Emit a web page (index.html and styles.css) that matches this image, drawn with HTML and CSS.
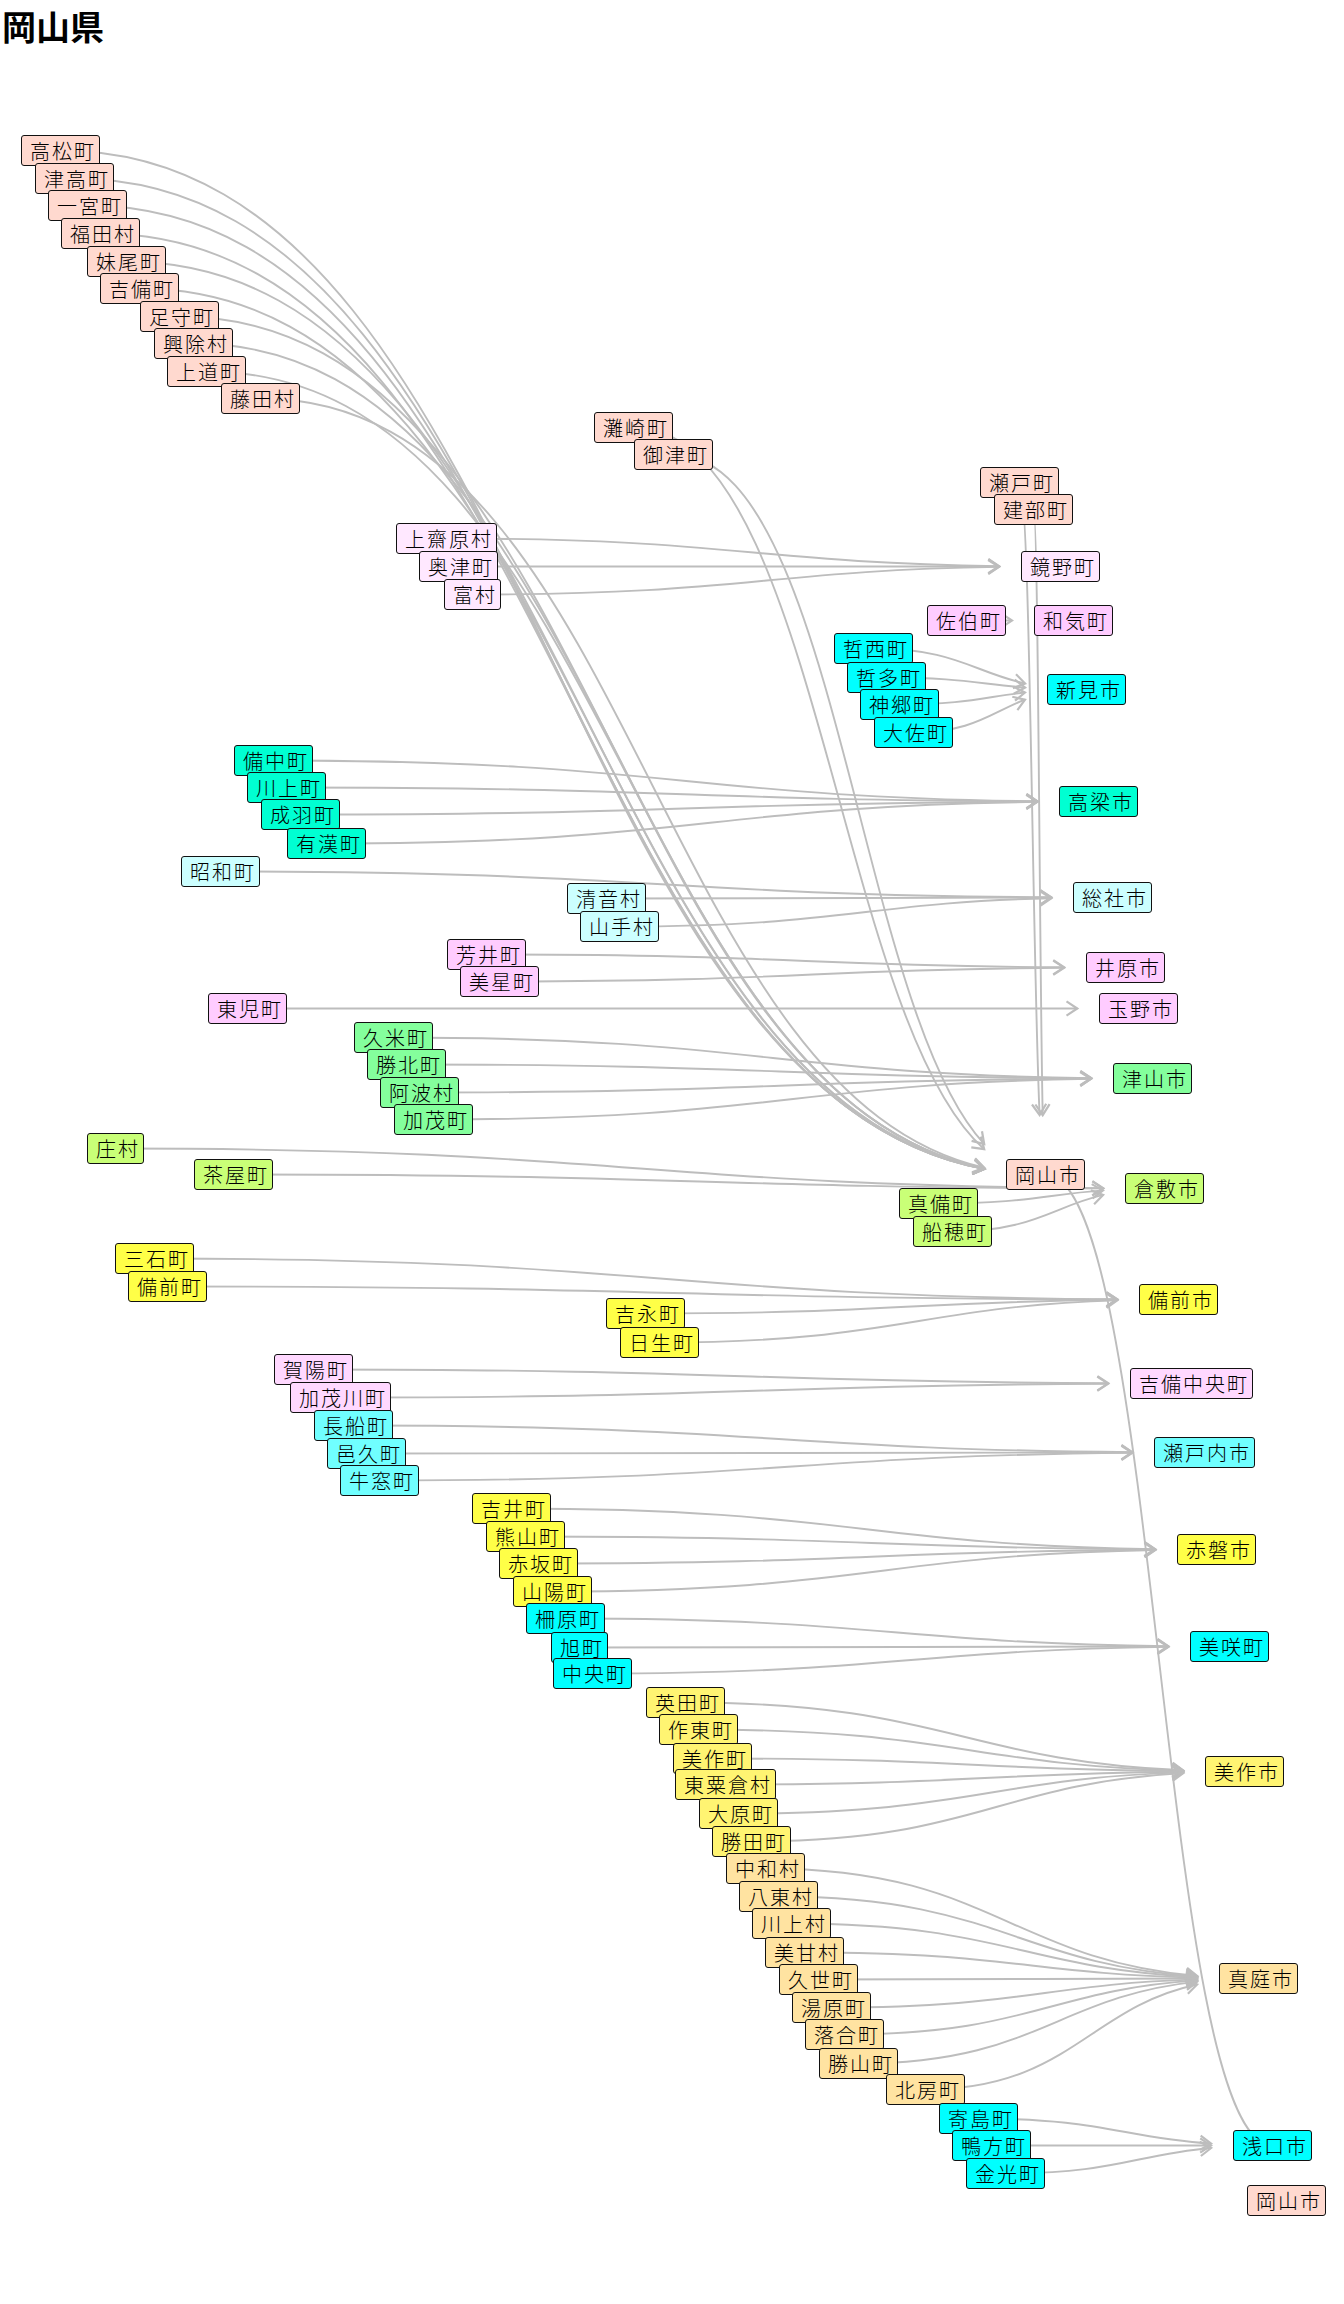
FILE: index.html
```html
<!DOCTYPE html>
<html lang="ja">
<head>
<meta charset="utf-8">
<title>岡山県</title>
<link rel="stylesheet" href="styles.css">
</head>
<body>
<header class="page-head"><h1 class="title">岡山県</h1></header>
<main class="graph" id="graph">
<svg class="edges" id="edges" width="1344" height="2244" viewBox="0 0 1344 2244"></svg>
<div class="node s" id="s1" style="left:21px;top:75px">高松町</div>
<div class="node s" id="s2" style="left:35px;top:103px">津高町</div>
<div class="node s" id="s3" style="left:48px;top:130px">一宮町</div>
<div class="node s" id="s4" style="left:61px;top:158px">福田村</div>
<div class="node s" id="s5" style="left:87px;top:186px">妹尾町</div>
<div class="node s" id="s6" style="left:100px;top:213px">吉備町</div>
<div class="node s" id="s7" style="left:140px;top:241px">足守町</div>
<div class="node s" id="s8" style="left:154px;top:268px">興除村</div>
<div class="node s" id="s9" style="left:167px;top:296px">上道町</div>
<div class="node s" id="s10" style="left:221px;top:323px">藤田村</div>
<div class="node s" id="s11" style="left:594px;top:352px">灘崎町</div>
<div class="node s" id="s12" style="left:634px;top:379px">御津町</div>
<div class="node s" id="s13" style="left:980px;top:407px">瀬戸町</div>
<div class="node s" id="s14" style="left:994px;top:434px">建部町</div>
<div class="node p1" id="k1" style="left:396px;top:463px">上齋原村</div>
<div class="node p1" id="k2" style="left:419px;top:491px">奥津町</div>
<div class="node p1" id="k3" style="left:444px;top:519px">富村</div>
<div class="node p1" id="kagamino" style="left:1021px;top:491px">鏡野町</div>
<div class="node p2" id="saeki" style="left:927px;top:545px">佐伯町</div>
<div class="node p2" id="wake" style="left:1034px;top:545px">和気町</div>
<div class="node c" id="n1" style="left:834px;top:573px">哲西町</div>
<div class="node c" id="n2" style="left:847px;top:602px">哲多町</div>
<div class="node c" id="n3" style="left:860px;top:629px">神郷町</div>
<div class="node c" id="n4" style="left:874px;top:657px">大佐町</div>
<div class="node c" id="niimi" style="left:1047px;top:614px">新見市</div>
<div class="node t" id="t1" style="left:234px;top:685px">備中町</div>
<div class="node t" id="t2" style="left:247px;top:712px">川上町</div>
<div class="node t" id="t3" style="left:261px;top:739px">成羽町</div>
<div class="node t" id="t4" style="left:287px;top:768px">有漢町</div>
<div class="node t" id="takahashi" style="left:1059px;top:726px">高梁市</div>
<div class="node lc" id="j1" style="left:181px;top:796px">昭和町</div>
<div class="node lc" id="j2" style="left:567px;top:823px">清音村</div>
<div class="node lc" id="j3" style="left:580px;top:851px">山手村</div>
<div class="node lc" id="soja" style="left:1073px;top:822px">総社市</div>
<div class="node p2" id="i1" style="left:447px;top:879px">芳井町</div>
<div class="node p2" id="i2" style="left:460px;top:906px">美星町</div>
<div class="node p2" id="ibara" style="left:1086px;top:892px">井原市</div>
<div class="node p2" id="tm1" style="left:208px;top:933px">東児町</div>
<div class="node p2" id="tamano" style="left:1099px;top:933px">玉野市</div>
<div class="node g" id="ts1" style="left:354px;top:962px">久米町</div>
<div class="node g" id="ts2" style="left:367px;top:989px">勝北町</div>
<div class="node g" id="ts3" style="left:380px;top:1017px">阿波村</div>
<div class="node g" id="ts4" style="left:394px;top:1044px">加茂町</div>
<div class="node g" id="tsuyama" style="left:1113px;top:1003px">津山市</div>
<div class="node yg" id="ku1" style="left:87px;top:1073px">庄村</div>
<div class="node yg" id="ku2" style="left:194px;top:1099px">茶屋町</div>
<div class="node s" id="okayama" style="left:1006px;top:1099px">岡山市</div>
<div class="node yg" id="kurashiki" style="left:1125px;top:1113px">倉敷市</div>
<div class="node yg" id="ku3" style="left:899px;top:1128px">真備町</div>
<div class="node yg" id="ku4" style="left:913px;top:1156px">船穂町</div>
<div class="node y" id="b1" style="left:115px;top:1183px">三石町</div>
<div class="node y" id="b2" style="left:128px;top:1211px">備前町</div>
<div class="node y" id="b3" style="left:606px;top:1238px">吉永町</div>
<div class="node y" id="b4" style="left:620px;top:1267px">日生町</div>
<div class="node y" id="bizen" style="left:1139px;top:1224px">備前市</div>
<div class="node l" id="kc1" style="left:274px;top:1294px">賀陽町</div>
<div class="node l" id="kc2" style="left:290px;top:1322px">加茂川町</div>
<div class="node l" id="kibichuo" style="left:1130px;top:1308px">吉備中央町</div>
<div class="node a" id="st1" style="left:314px;top:1350px">長船町</div>
<div class="node a" id="st2" style="left:327px;top:1378px">邑久町</div>
<div class="node a" id="st3" style="left:340px;top:1405px">牛窓町</div>
<div class="node a" id="setouchi" style="left:1154px;top:1377px">瀬戸内市</div>
<div class="node y" id="ak1" style="left:472px;top:1433px">吉井町</div>
<div class="node y" id="ak2" style="left:486px;top:1461px">熊山町</div>
<div class="node y" id="ak3" style="left:499px;top:1488px">赤坂町</div>
<div class="node y" id="ak4" style="left:513px;top:1516px">山陽町</div>
<div class="node y" id="akaiwa" style="left:1177px;top:1474px">赤磐市</div>
<div class="node c" id="ms1" style="left:526px;top:1543px">柵原町</div>
<div class="node c" id="ms2" style="left:551px;top:1572px">旭町</div>
<div class="node c" id="ms3" style="left:553px;top:1598px">中央町</div>
<div class="node c" id="misaki" style="left:1190px;top:1571px">美咲町</div>
<div class="node sy" id="mm1" style="left:646px;top:1627px">英田町</div>
<div class="node sy" id="mm2" style="left:659px;top:1654px">作東町</div>
<div class="node sy" id="mm3" style="left:673px;top:1683px">美作町</div>
<div class="node sy" id="mm4" style="left:675px;top:1709px">東粟倉村</div>
<div class="node sy" id="mm5" style="left:699px;top:1738px">大原町</div>
<div class="node sy" id="mm6" style="left:712px;top:1766px">勝田町</div>
<div class="node sy" id="mimasaka" style="left:1205px;top:1696px">美作市</div>
<div class="node m" id="mn1" style="left:726px;top:1793px">中和村</div>
<div class="node m" id="mn2" style="left:739px;top:1821px">八東村</div>
<div class="node m" id="mn3" style="left:752px;top:1848px">川上村</div>
<div class="node m" id="mn4" style="left:765px;top:1877px">美甘村</div>
<div class="node m" id="mn5" style="left:779px;top:1904px">久世町</div>
<div class="node m" id="mn6" style="left:792px;top:1932px">湯原町</div>
<div class="node m" id="mn7" style="left:805px;top:1959px">落合町</div>
<div class="node m" id="mn8" style="left:819px;top:1988px">勝山町</div>
<div class="node m" id="mn9" style="left:886px;top:2014px">北房町</div>
<div class="node m" id="maniwa" style="left:1219px;top:1903px">真庭市</div>
<div class="node c" id="as1" style="left:939px;top:2043px">寄島町</div>
<div class="node c" id="as2" style="left:952px;top:2070px">鴨方町</div>
<div class="node c" id="as3" style="left:966px;top:2098px">金光町</div>
<div class="node c" id="asakuchi" style="left:1233px;top:2070px">浅口市</div>
<div class="node s" id="okayama2" style="left:1247px;top:2125px">岡山市</div>
</main>
<script src="script.js"></script>
</body>
</html>
```
FILE: styles.css
```css
html, body {
  margin: 0;
  padding: 0;
  background: #ffffff;
  overflow: hidden;
}
body {
  width: 1344px;
  height: 2304px;
  font-family: "Noto Sans CJK JP", "Noto Sans CJK SC", sans-serif;
  color: #000;
}
.page-head {
  height: 60px;
  box-sizing: border-box;
  padding: 6px 0 0 2px;
}
.title {
  margin: 0;
  font-size: 34px;
  line-height: 40px;
  font-weight: 700;
}
.graph {
  position: relative;
  width: 1344px;
  height: 2244px;
}
.edges {
  position: absolute;
  left: 0;
  top: 0;
  z-index: 0;
}
.edge {
  fill: none;
  stroke: #bdbdbd;
  stroke-width: 1.9;
}
.arrow {
  fill: none;
  stroke: #bdbdbd;
  stroke-width: 2.2;
  stroke-linejoin: miter;
}
.node {
  position: absolute;
  z-index: 1;
  box-sizing: border-box;
  height: 31px;
  padding: 0 3px 0 8px;
  border: 1px solid #111;
  border-radius: 3px;
  font-size: 20px;
  font-weight: 300;
  line-height: 29px;
  letter-spacing: 2px;
  white-space: nowrap;
  color: #000;
}
.s { background: #ffd9cf; }
.p1 { background: #ffe8ff; }
.p2 { background: #ffccff; }
.c { background: #00ffff; }
.t { background: #00ffd2; }
.lc { background: #ccffff; }
.g { background: #84ff9c; }
.yg { background: #c9ff77; }
.y { background: #ffff47; }
.l { background: #ffd8ff; }
.a { background: #70ffff; }
.sy { background: #fff472; }
.m { background: #ffe3a1; }
```
FILE: script.js
```js
(function () {
  var GROUPS = {
    okayama: ['s1','s2','s3','s4','s5','s6','s7','s8','s9','s10','s11','s12','s13','s14'],
    kagamino: ['k1','k2','k3'],
    wake: ['saeki'],
    niimi: ['n1','n2','n3','n4'],
    takahashi: ['t1','t2','t3','t4'],
    soja: ['j1','j2','j3'],
    ibara: ['i1','i2'],
    tamano: ['tm1'],
    tsuyama: ['ts1','ts2','ts3','ts4'],
    kurashiki: ['ku1','ku2','ku3','ku4'],
    bizen: ['b1','b2','b3','b4'],
    kibichuo: ['kc1','kc2'],
    setouchi: ['st1','st2','st3'],
    akaiwa: ['ak1','ak2','ak3','ak4'],
    misaki: ['ms1','ms2','ms3'],
    mimasaka: ['mm1','mm2','mm3','mm4','mm5','mm6'],
    maniwa: ['mn1','mn2','mn3','mn4','mn5','mn6','mn7','mn8','mn9'],
    asakuchi: ['as1','as2','as3']
  };
  var NS = 'http://www.w3.org/2000/svg';
  var svg = document.getElementById('edges');

  function box(id) {
    var e = document.getElementById(id);
    return { x: e.offsetLeft, y: e.offsetTop, w: e.offsetWidth, h: e.offsetHeight };
  }
  function lerp(a, b, t) { return { x: a.x + (b.x - a.x) * t, y: a.y + (b.y - a.y) * t }; }
  function pt(p, t) {
    var u = 1 - t;
    return {
      x: u*u*u*p[0].x + 3*u*u*t*p[1].x + 3*u*t*t*p[2].x + t*t*t*p[3].x,
      y: u*u*u*p[0].y + 3*u*u*t*p[1].y + 3*u*t*t*p[2].y + t*t*t*p[3].y
    };
  }
  function f(n) { return n.toFixed(1); }
  function curve(fromId, toId) {
    var a = box(fromId), b = box(toId);
    var c0 = { x: a.x + a.w / 2, y: a.y + a.h / 2 };
    var c3 = { x: b.x + b.w / 2, y: b.y + b.h / 2 };
    var dx = c0.x - c3.x;
    return { p: [c0, { x: c0.x - 0.5 * dx, y: c0.y }, { x: c3.x + 0.5 * dx, y: c3.y }, c3], b: b };
  }
  function add(tag, attrs) {
    var el = document.createElementNS(NS, tag);
    for (var k in attrs) el.setAttribute(k, attrs[k]);
    svg.appendChild(el);
  }
  function edge(fromId, toId, arrow) {
    var c = curve(fromId, toId), p = c.p, b = c.b;
    if (!arrow) {
      add('path', { 'class': 'edge', d: 'M' + f(p[0].x) + ' ' + f(p[0].y) + ' C' + f(p[1].x) + ' ' + f(p[1].y) + ' ' + f(p[2].x) + ' ' + f(p[2].y) + ' ' + f(p[3].x) + ' ' + f(p[3].y) });
      return;
    }
    var R = { l: b.x - 22, r: b.x + b.w + 22, t: b.y - 44, b: b.y + b.h + 44 };
    var tc = 1;
    for (var i = 0; i <= 2000; i++) {
      var t = i / 2000, q = pt(p, t);
      if (q.x >= R.l && q.x <= R.r && q.y >= R.t && q.y <= R.b) { tc = t; break; }
    }
    var A = lerp(p[0], p[1], tc), B = lerp(p[1], p[2], tc), C = lerp(p[2], p[3], tc);
    var D = lerp(A, B, tc), E = lerp(B, C, tc), F = lerp(D, E, tc);
    add('path', { 'class': 'edge', d: 'M' + f(p[0].x) + ' ' + f(p[0].y) + ' C' + f(A.x) + ' ' + f(A.y) + ' ' + f(D.x) + ' ' + f(D.y) + ' ' + f(F.x) + ' ' + f(F.y) });
    var ang = Math.atan2(E.y - D.y, E.x - D.x);
    if (E.x === D.x && E.y === D.y) ang = Math.atan2(p[3].y - F.y, p[3].x - F.x);
    var L = 13, s = 0.58;
    var a1 = { x: F.x - L * Math.cos(ang - s), y: F.y - L * Math.sin(ang - s) };
    var a2 = { x: F.x - L * Math.cos(ang + s), y: F.y - L * Math.sin(ang + s) };
    add('polyline', { 'class': 'arrow', points: f(a1.x) + ',' + f(a1.y) + ' ' + f(F.x) + ',' + f(F.y) + ' ' + f(a2.x) + ',' + f(a2.y) });
  }

  edge('okayama', 'asakuchi', false);
  for (var target in GROUPS) {
    GROUPS[target].forEach(function (src) { edge(src, target, true); });
  }
})();
```
